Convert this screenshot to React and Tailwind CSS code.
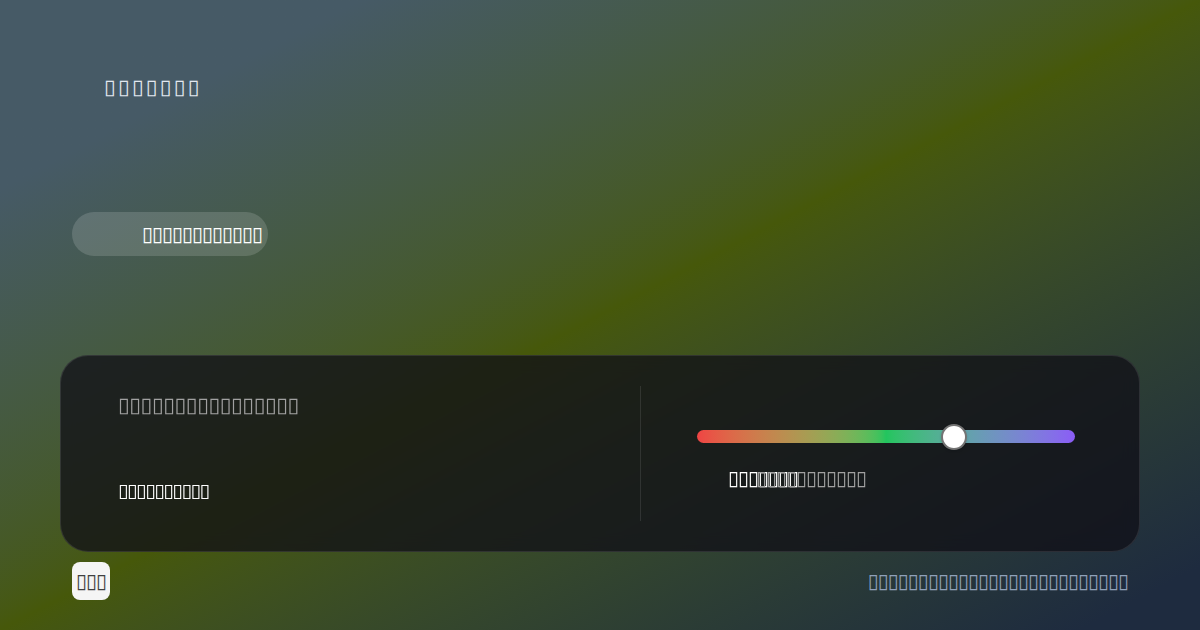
import { useState } from 'react';

// hue picker card over a diagonal backdrop; labels are placeholder glyph runs
export default function App() {
  const [hue] = useState(68);

  return (
    <main
      className="relative h-[630px] w-full overflow-hidden bg-gradient-to-br from-[#465a66] from-15% via-[#46580a] via-50% to-[#1e2b3f] to-95% text-white"
      style={{ fontFamily: '"DejaVu Sans", "Noto Sans", sans-serif' }}
    >
      <div className="flex flex-col px-[60px]">
        <h1 className="pl-[44px] pt-[78px] text-[21px] leading-[18px] tracking-[2.4px] text-slate-200">▯▯▯▯▯▯▯</h1>

        <div className="ml-3 mt-[116px] flex h-[44px] w-[196px] items-center justify-end rounded-full bg-white/15 pr-[6px]">
          <span className="text-[20px] leading-none tracking-[-1px] text-white">▯▯▯▯▯▯▯▯▯▯▯▯</span>
        </div>

        <section className="mt-[99px] flex h-[197px] rounded-[28px] border border-white/10 bg-[#100f17]/75 py-[30px] backdrop-blur">
          <div className="flex w-[579px] flex-col justify-between px-[57px] pb-[22px] pt-[10px]">
            <p className="text-[21px] leading-[18px] tracking-[-0.25px] text-neutral-400">▯▯▯▯▯▯▯▯▯▯▯▯▯▯▯▯</p>
            <p className="text-[19px] leading-[18px] tracking-[-1.4px] text-white">▯▯▯▯▯▯▯▯▯▯</p>
          </div>

          <div className="w-px bg-white/10" />

          <div className="flex flex-1 flex-col pl-[56px] pr-[64px] pt-[44px]">
            <div className="relative h-[13px] rounded-full bg-gradient-to-r from-[#ef4444] via-[#22c55e] to-[#8b5cf6]">
              <div
                className="absolute top-1/2 h-[26px] w-[26px] -translate-x-1/2 -translate-y-1/2 rounded-full border-2 border-neutral-500 bg-white shadow"
                style={{ left: `${hue}%` }}
              />
            </div>
            <div className="relative mt-[26px] ml-[31px] h-[18px]">
              <span className="absolute left-0 top-0 text-[20px] leading-[18px] tracking-[-1px] text-white">▯▯▯▯▯▯▯</span>
              <span className="absolute left-[28px] top-0 text-[20px] leading-[18px] tracking-[-1px] text-neutral-400">▯▯▯▯▯▯▯▯▯▯▯</span>
            </div>
          </div>
        </section>

        <footer className="mt-[10px] flex items-center justify-between pl-3 pr-3">
          <span className="flex h-[38px] w-[38px] items-center justify-center rounded-[8px] bg-neutral-100 text-[20px] leading-none tracking-[-1px] text-neutral-700">▯▯▯</span>
          <span className="text-[20px] leading-none tracking-[-1px] text-slate-400">▯▯▯▯▯▯▯▯▯▯▯▯▯▯▯▯▯▯▯▯▯▯▯▯▯▯</span>
        </footer>
      </div>
    </main>
  );
}
